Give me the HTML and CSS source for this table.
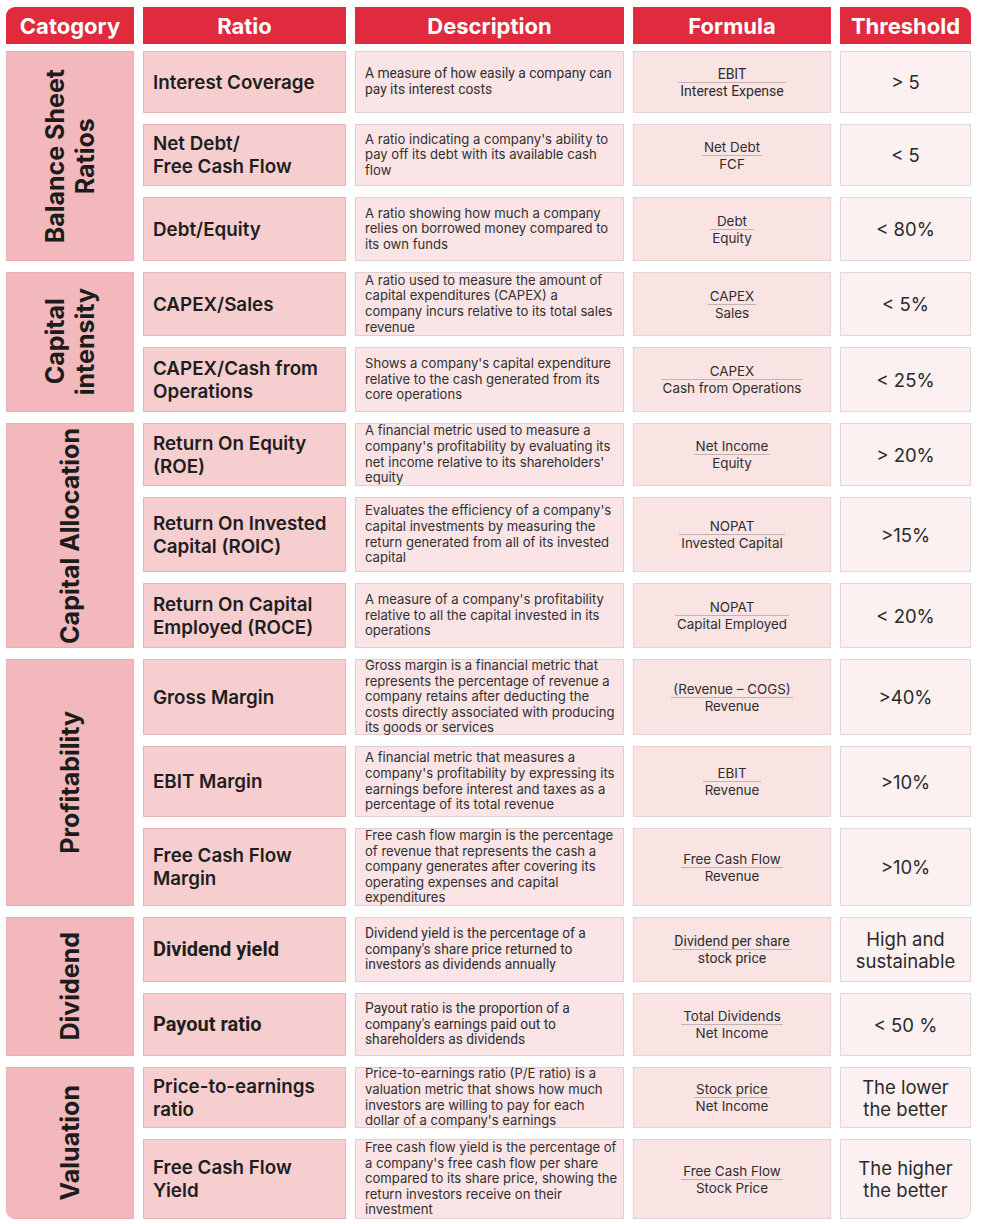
FILE: index.html
```html
<!DOCTYPE html>
<html lang="en">
<head>
<meta charset="utf-8">
<title>Financial Ratios</title>
<link rel="stylesheet" href="styles.css">
</head>
<body>
<div class="sheet">
  <div class="head">
    <div class="hcell hcell--first">Catogory</div>
    <div class="hcell">Ratio</div>
    <div class="hcell">Description</div>
    <div class="hcell">Formula</div>
    <div class="hcell hcell--last">Threshold</div>
  </div>

  <div class="body">
    <!-- Balance sheet -->
    <div class="cat span-3"><span class="cat__txt">Balance Sheet<br>Ratios</span></div>
    <div class="ratio">Interest Coverage</div>
    <div class="desc desc--roboto">A measure of how easily a company can pay its interest costs</div>
    <div class="formula formula--roboto"><span class="frac"><span class="num">EBIT</span><span class="den">Interest Expense</span></span></div>
    <div class="thr">&gt; 5</div>

    <div class="ratio">Net Debt/<br>Free Cash Flow</div>
    <div class="desc">A ratio indicating a company's ability to pay off its debt with its available cash flow</div>
    <div class="formula"><span class="frac"><span class="num">Net Debt</span><span class="den">FCF</span></span></div>
    <div class="thr">&lt; 5</div>

    <div class="ratio">Debt/Equity</div>
    <div class="desc">A ratio showing how much a company relies on borrowed money compared to its own funds</div>
    <div class="formula"><span class="frac"><span class="num">Debt</span><span class="den">Equity</span></span></div>
    <div class="thr">&lt; 80%</div>

    <!-- Capital intensity -->
    <div class="cat span-2"><span class="cat__txt">Capital<br>intensity</span></div>
    <div class="ratio">CAPEX/Sales</div>
    <div class="desc"><span>A ratio used to measure the amount of capital expenditures (CAPEX) a<br>company incurs relative to its total sales revenue</span></div>
    <div class="formula"><span class="frac"><span class="num">CAPEX</span><span class="den">Sales</span></span></div>
    <div class="thr">&lt; 5%</div>

    <div class="ratio">CAPEX/Cash from Operations</div>
    <div class="desc">Shows a company's capital expenditure relative to the cash generated from its core operations</div>
    <div class="formula"><span class="frac"><span class="num">CAPEX</span><span class="den">Cash from Operations</span></span></div>
    <div class="thr">&lt; 25%</div>

    <!-- Capital allocation -->
    <div class="cat span-3"><span class="cat__txt">Capital Allocation</span></div>
    <div class="ratio">Return On Equity<br>(ROE)</div>
    <div class="desc">A financial metric used to measure a company's profitability by evaluating its net income relative to its shareholders' equity</div>
    <div class="formula"><span class="frac"><span class="num">Net Income</span><span class="den">Equity</span></span></div>
    <div class="thr">&gt; 20%</div>

    <div class="ratio">Return On Invested Capital (ROIC)</div>
    <div class="desc">Evaluates the efficiency of a company's capital investments by measuring the return generated from all of its invested capital</div>
    <div class="formula"><span class="frac"><span class="num">NOPAT</span><span class="den">Invested Capital</span></span></div>
    <div class="thr">&gt;15%</div>

    <div class="ratio">Return On Capital Employed (ROCE)</div>
    <div class="desc">A measure of a company's profitability relative to all the capital invested in its operations</div>
    <div class="formula"><span class="frac"><span class="num">NOPAT</span><span class="den">Capital Employed</span></span></div>
    <div class="thr">&lt; 20%</div>

    <!-- Profitability -->
    <div class="cat span-3"><span class="cat__txt">Profitability</span></div>
    <div class="ratio">Gross Margin</div>
    <div class="desc">Gross margin is a financial metric that represents the percentage of revenue a company retains after deducting the costs directly associated with producing its goods or services</div>
    <div class="formula"><span class="frac"><span class="num">(Revenue – COGS)</span><span class="den">Revenue</span></span></div>
    <div class="thr">&gt;40%</div>

    <div class="ratio">EBIT Margin</div>
    <div class="desc">A financial metric that measures a company's profitability by expressing its earnings before interest and taxes as a percentage of its total revenue</div>
    <div class="formula"><span class="frac"><span class="num">EBIT</span><span class="den">Revenue</span></span></div>
    <div class="thr">&gt;10%</div>

    <div class="ratio">Free Cash Flow<br>Margin</div>
    <div class="desc">Free cash flow margin is the percentage of revenue that represents the cash a company generates after covering its operating expenses and capital expenditures</div>
    <div class="formula"><span class="frac"><span class="num">Free Cash Flow</span><span class="den">Revenue</span></span></div>
    <div class="thr">&gt;10%</div>

    <!-- Dividend -->
    <div class="cat span-2"><span class="cat__txt">Dividend</span></div>
    <div class="ratio ratio--roboto">Dividend yield</div>
    <div class="desc desc--roboto">Dividend yield is the percentage of a company's share price returned to investors as dividends annually</div>
    <div class="formula formula--roboto"><span class="frac"><span class="num">Dividend per share</span><span class="den">stock price</span></span></div>
    <div class="thr">High and<br>sustainable</div>

    <div class="ratio ratio--roboto">Payout ratio</div>
    <div class="desc desc--roboto">Payout ratio is the proportion of a company's earnings paid out to shareholders as dividends</div>
    <div class="formula"><span class="frac"><span class="num">Total Dividends</span><span class="den">Net Income</span></span></div>
    <div class="thr">&lt; 50 %</div>

    <!-- Valuation -->
    <div class="cat span-2 cat--last"><span class="cat__txt">Valuation</span></div>
    <div class="ratio">Price-to-earnings<br>ratio</div>
    <div class="desc">Price-to-earnings ratio (P/E ratio) is a valuation metric that shows how much investors are willing to pay for each dollar of a company's earnings</div>
    <div class="formula"><span class="frac"><span class="num">Stock price</span><span class="den">Net Income</span></span></div>
    <div class="thr">The lower<br>the better</div>

    <div class="ratio">Free Cash Flow<br>Yield</div>
    <div class="desc">Free cash flow yield is the percentage of a company's free cash flow per share compared to its share price, showing the return investors receive on their investment</div>
    <div class="formula"><span class="frac"><span class="num">Free Cash Flow</span><span class="den">Stock Price</span></span></div>
    <div class="thr thr--last">The higher<br>the better</div>
  </div>
</div>
</body>
</html>
```

FILE: styles.css
```css
* { box-sizing: border-box; }

html, body {
  margin: 0;
  padding: 0;
  background: #ffffff;
}

body {
  font-family: Inter, "Noto Sans", sans-serif;
  color: #262626;
}

.sheet {
  padding: 7px 0 0 6px;
  width: 986px;
}

.head,
.body {
  display: grid;
  grid-template-columns: 128px 203px 269px 198px 131px;
  column-gap: 9px;
}

.head {
  height: 37px;
  margin-bottom: 7px;
}

.hcell {
  background: #e02a3e;
  color: #ffffff;
  font-weight: 700;
  font-size: 22px;
  display: flex;
  align-items: center;
  justify-content: center;
}
.hcell--first { border-top-left-radius: 9px; }
.hcell--last { border-top-right-radius: 9px; }

.body {
  row-gap: 11px;
  grid-template-rows: 62px 62px 64px 64px 65px 63px 75px 65px 76px 71px 78px 65px 63px 61px 80px;
}

.span-2 { grid-row: span 2; }
.span-3 { grid-row: span 3; }

.cat {
  background: #f2b8bc;
  border: 1px solid #e9aeb2;
  display: flex;
  align-items: center;
  justify-content: center;
}
.cat--last { border-bottom-left-radius: 9px; }

.cat__txt {
  writing-mode: vertical-rl;
  transform: rotate(180deg);
  font-weight: 700;
  font-size: 25px;
  line-height: 30px;
  text-align: center;
  color: #1c1c1c;
  white-space: nowrap;
}

.ratio {
  background: #f6ced0;
  border: 1px solid #e6b5b8;
  display: flex;
  align-items: center;
  padding: 0 9px;
  font-weight: 600;
  font-size: 18.8px;
  line-height: 23px;
  color: #1e1e1e;
}
.ratio--roboto {
  font-family: Roboto, sans-serif;
  font-weight: 700;
  font-size: 20px;
}

.desc {
  background: #fae4e5;
  border: 1px solid #dfcfd0;
  display: flex;
  align-items: center;
  padding: 0 2px 0 9px;
  font-size: 13.1px;
  line-height: 15.6px;
  color: #303030;
}
.desc--roboto {
  font-family: Roboto, sans-serif;
  font-size: 13.8px;
}

.formula {
  background: #f9e3e3;
  border: 1px solid #e2d2d2;
  display: flex;
  align-items: center;
  justify-content: center;
  font-size: 13.4px;
  line-height: 16px;
  color: #2e2e2e;
}
.formula--roboto {
  font-family: Roboto, sans-serif;
  font-size: 14px;
}

.frac {
  display: inline-flex;
  flex-direction: column;
  align-items: stretch;
  text-align: center;
}
.num {
  border-bottom: 1px solid #bfb3b3;
  padding: 0 2px;
}
.den {
  padding: 0 2px;
}

.thr {
  background: #fcf0f0;
  border: 1px solid #e2d8d8;
  display: flex;
  align-items: center;
  justify-content: center;
  text-align: center;
  font-size: 18.5px;
  line-height: 22px;
  color: #2a2a2a;
}
.thr--last { border-bottom-right-radius: 9px; }
```
